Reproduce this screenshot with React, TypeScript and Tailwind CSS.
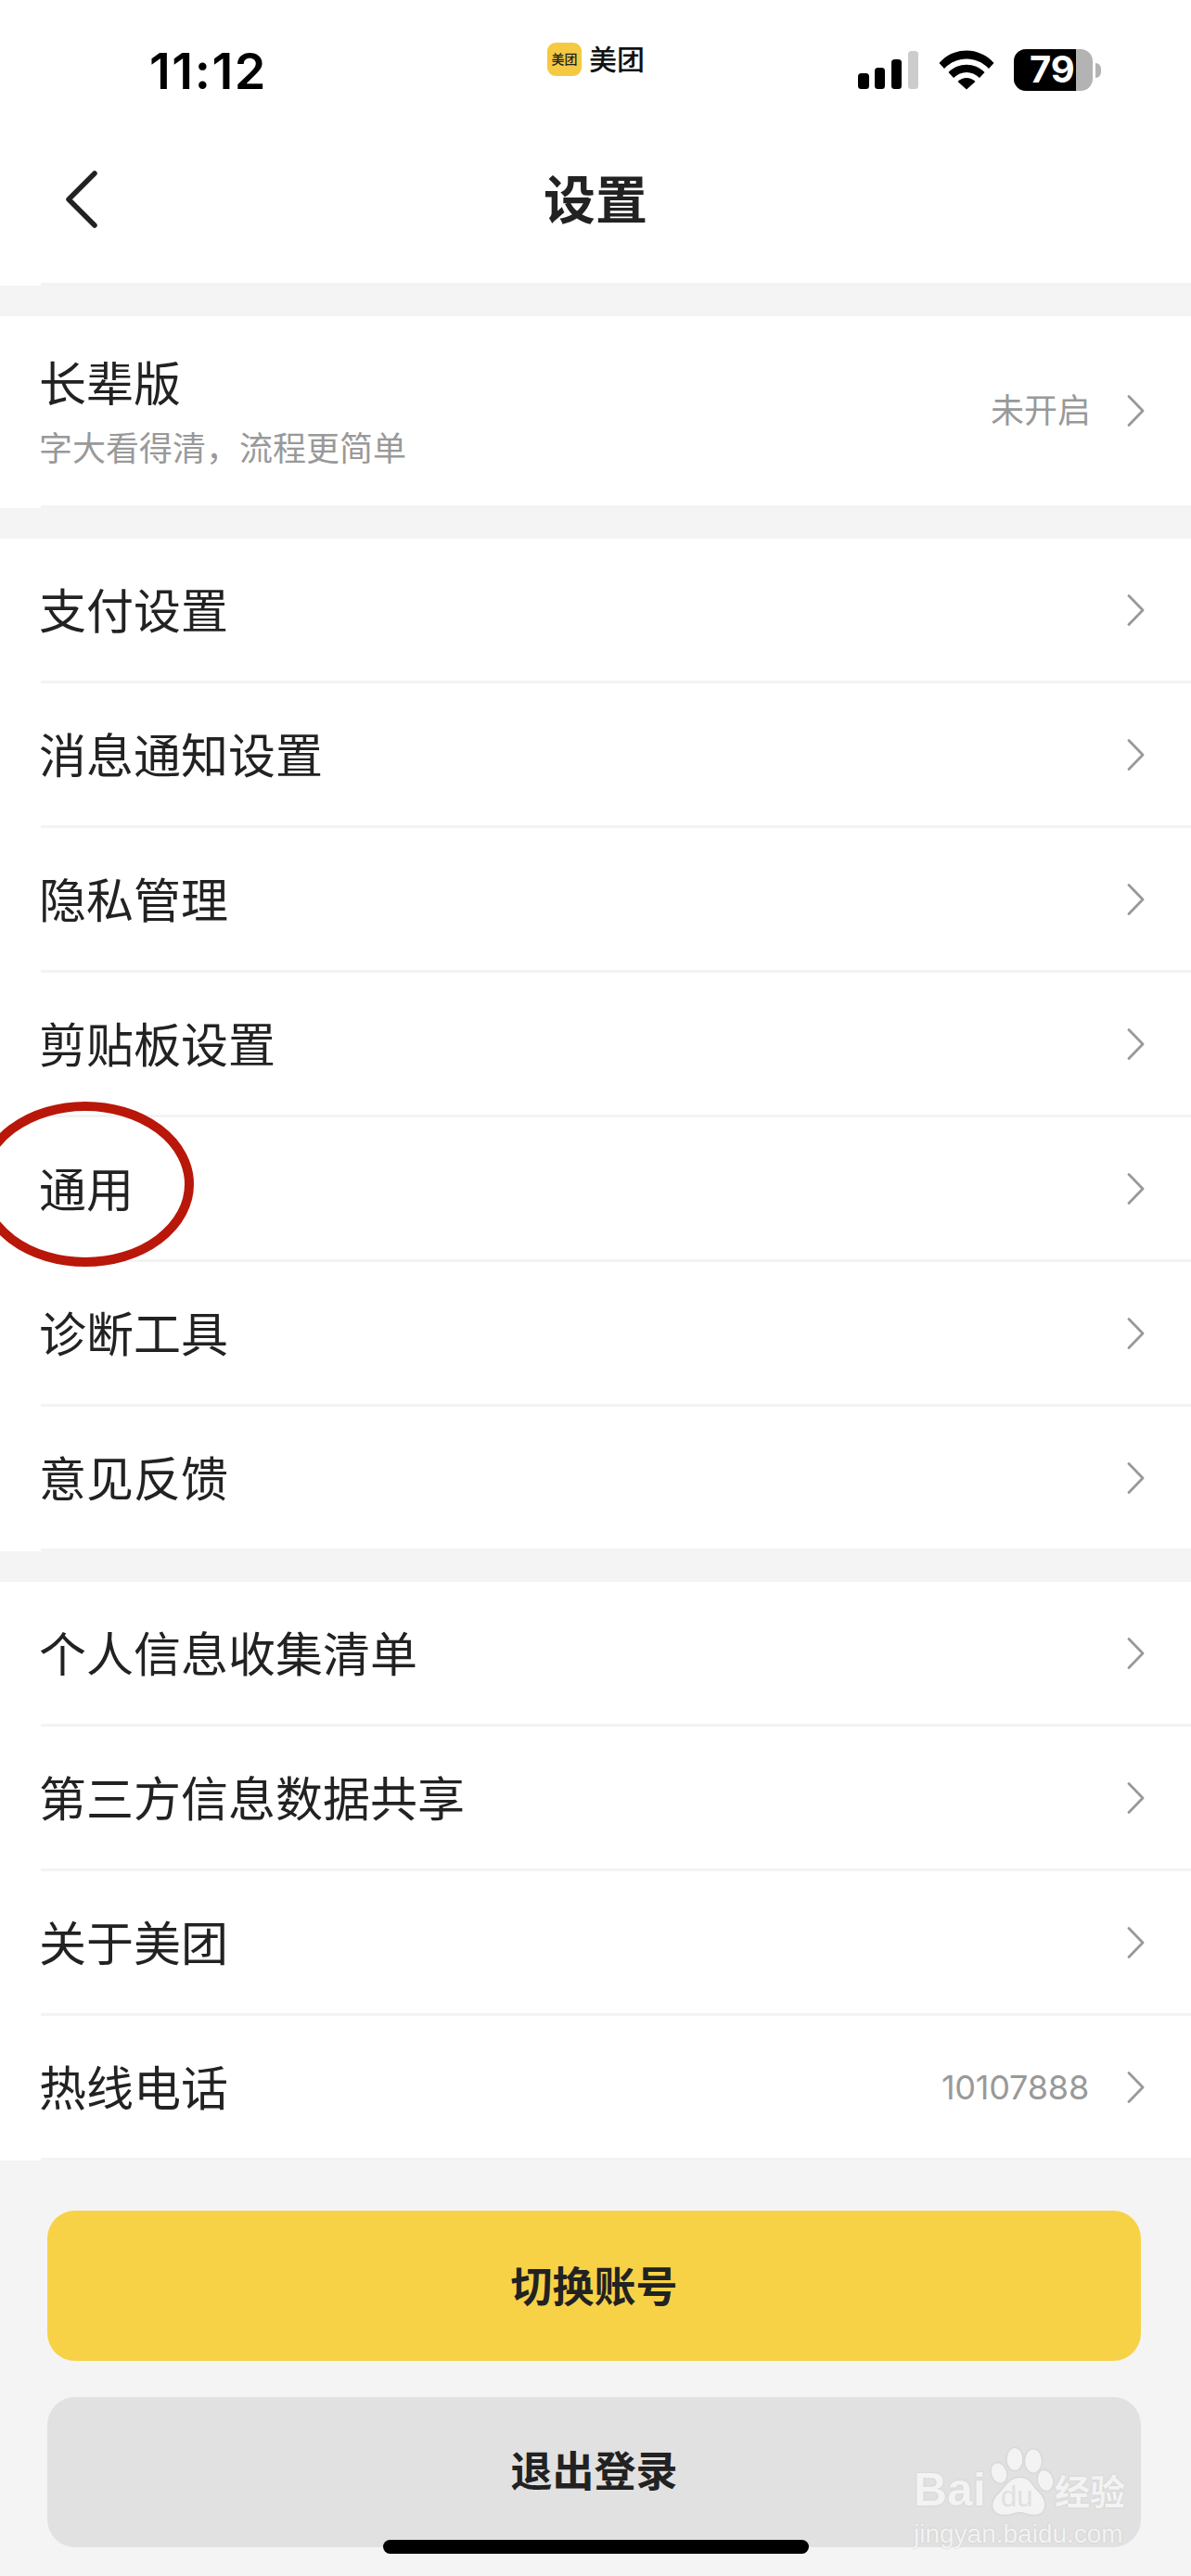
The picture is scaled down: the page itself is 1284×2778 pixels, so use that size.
const cjk = "font-['Inter','Noto_Sans_CJK_SC',sans-serif]";

type Row = { label: string; value?: string };

const group1: Row[] = [
  { label: "支付设置" },
  { label: "消息通知设置" },
  { label: "隐私管理" },
  { label: "剪贴板设置" },
  { label: "通用" },
  { label: "诊断工具" },
  { label: "意见反馈" },
];

const group2: Row[] = [
  { label: "个人信息收集清单" },
  { label: "第三方信息数据共享" },
  { label: "关于美团" },
  { label: "热线电话", value: "10107888" },
];

function Chevron() {
  return (
    <svg width="20" height="34" viewBox="0 0 20 34" fill="none" className="shrink-0">
      <path d="M3 1.5 L18 17 L3 32.5" stroke="#999999" strokeWidth="2.8" strokeLinecap="round" strokeLinejoin="round" />
    </svg>
  );
}

function SettingRow({ label, value }: Row) {
  return (
    <div className="ml-[44px] flex h-[156px] items-center border-b-[3px] border-[#f3f3f3] pr-[50px]">
      <span className="-ml-[2px] flex-1 pt-[3px] text-[51px] leading-none text-[#222222]">{label}</span>
      {value && <span className="mr-[40px] text-[36px] leading-none tracking-[-0.2px] text-[#999999]">{value}</span>}
      <Chevron />
    </div>
  );
}

function StatusBar() {
  return (
    <div className="relative flex h-[120px] items-start">
      <span className="ml-[161px] mt-[47px] text-[54px] font-semibold leading-[60px] tracking-[1.5px] text-black">11:12</span>
      <div className="absolute left-[590px] top-[46px] flex items-center whitespace-nowrap">
        <div className="flex h-[36px] w-[37px] items-center justify-center rounded-[9px] bg-[#f5c942] text-[14px] font-medium leading-none text-[#222222]">
          美团
        </div>
        <span className="ml-[8px] text-[30px] font-medium leading-[36px] text-[#111111]">美团</span>
      </div>
      <div className="absolute left-[925px] top-[53px] flex items-start">
        <svg width="66" height="44" viewBox="0 0 66 44" className="shrink-0">
          <rect x="0" y="26" width="12" height="17" rx="3.5" fill="#000" />
          <rect x="18" y="20" width="11" height="23" rx="3.5" fill="#000" />
          <rect x="36" y="11" width="11" height="32" rx="3.5" fill="#000" />
          <rect x="54" y="2" width="11" height="41" rx="3.5" fill="#cccccc" />
        </svg>
        <svg width="60" height="44" viewBox="0 0 60 44" className="ml-[21px] shrink-0">
          <path d="M0.5 15 C16 -3 44 -3 59.5 15 L54 21 C41 7 19 7 6 21 Z" fill="#000" />
          <path d="M10.5 25 C21 14 39 14 49.5 25 L44 31 C36 23 24 23 16 31 Z" fill="#000" />
          <path d="M20.5 35 C26 29.5 34 29.5 39.5 35 L30 43.5 Z" fill="#000" />
        </svg>
        <div className="relative ml-[21px] flex h-[45px] w-[85px] overflow-hidden rounded-[13px] bg-[#b3b3b3]">
          <div className="h-full w-[67px] bg-black" />
          <span className="absolute left-[17px] top-[2px] text-[40px] font-bold leading-[40px] text-white">79</span>
        </div>
        <div className="ml-[3px] mt-[15px] h-[16px] w-[6px] rounded-r-full bg-[#b3b3b3]" />
      </div>
    </div>
  );
}

function Watermark() {
  return (
    <div className="absolute left-[985px] top-[2638px] h-[112px] w-[240px] text-[#f3f3f3] [text-shadow:0_0_2px_#c4c4c4]">
      <svg width="74" height="80" viewBox="0 0 74 80" className="absolute left-[78px] top-[0px] [filter:drop-shadow(0_0_1px_#c0c0c0)]">
        <ellipse cx="31" cy="14" rx="8.5" ry="12" fill="#f3f3f3" />
        <ellipse cx="51" cy="16" rx="9" ry="12.5" fill="#f3f3f3" />
        <ellipse cx="14" cy="29" rx="8" ry="11" fill="#f3f3f3" transform="rotate(-20 14 29)" />
        <ellipse cx="64" cy="37" rx="8" ry="11" fill="#f3f3f3" transform="rotate(-15 64 37)" />
        <path d="M37 34 C48 34 50 44 57 50 C66 58 66 74 52 74 C44 74 42 71 37 71 C30 71 28 74 20 74 C6 74 4 62 12 53 C20 46 24 34 37 34 Z" fill="#f3f3f3" />
      </svg>
      <span className="absolute left-[94px] top-[37px] font-['Liberation_Sans',sans-serif] text-[31px] leading-[36px] text-[#e0e0e0] [text-shadow:none]">du</span>
      <span className="absolute left-[0px] top-[17px] font-['Liberation_Sans',sans-serif] text-[50px] font-bold leading-[60px]">Bai</span>
      <span className="absolute left-[152px] top-[27px] text-[38px] font-bold leading-[44px]">经验</span>
      <span className="absolute left-[0px] top-[78px] font-['Liberation_Sans',sans-serif] text-[28px] leading-[34px]">jingyan.baidu.com</span>
    </div>
  );
}

export default function App() {
  return (
    <div className={`relative h-[2778px] w-[1284px] overflow-hidden bg-[#f4f4f4] ${cjk}`}>
      <header className="bg-white">
        <StatusBar />
        <div className="ml-[44px] flex h-[188px] items-start border-b-[3px] border-[#f3f3f3] pr-[44px]">
          <svg width="36" height="62" viewBox="0 0 36 62" className="ml-[26px] mt-[64px] shrink-0">
            <path d="M32 3 L4 31 L32 59" fill="none" stroke="#222222" strokeWidth="5.5" strokeLinecap="round" strokeLinejoin="round" />
          </svg>
          <h1 className="ml-[480px] mt-[66px] text-[56px] font-bold leading-[60px] text-[#222222]">设置</h1>
        </div>
      </header>

      <section className="mt-[33px] bg-white">
        <div className="ml-[44px] flex h-[207px] items-center border-b-[3px] border-[#f3f3f3] pr-[50px]">
          <div className="-ml-[2px] flex-1 pt-[5px]">
            <div className="text-[51px] leading-none text-[#222222]">长辈版</div>
            <div className="mt-[26px] text-[36px] leading-none text-[#999999]">字大看得清，流程更简单</div>
          </div>
          <span className="mr-[38px] text-[36px] leading-none text-[#999999]">未开启</span>
          <Chevron />
        </div>
      </section>

      <section className="mt-[33px] bg-white">
        {group1.map((r) => (
          <SettingRow key={r.label} {...r} />
        ))}
      </section>

      <section className="mt-[33px] bg-white">
        {group2.map((r) => (
          <SettingRow key={r.label} {...r} />
        ))}
      </section>

      <div className="ml-[51px] mr-[54px] mt-[54px] flex flex-col gap-[39px]">
        <button className="flex h-[162px] items-center justify-center rounded-[30px] bg-[#f7d247] pt-[3px] text-[45px] font-semibold text-[#222222]">
          切换账号
        </button>
        <button className="flex h-[162px] items-center justify-center rounded-[30px] bg-[#e1e1e1] text-[45px] font-semibold text-[#222222]">
          退出登录
        </button>
      </div>

      <Watermark />

      <div className="absolute left-[413px] top-[2739px] h-[15px] w-[459px] rounded-full bg-black" />

      <svg width="215" height="182" viewBox="0 0 215 182" className="absolute left-[-5px] top-[1186px]">
        <ellipse cx="97" cy="91" rx="112" ry="84" fill="none" stroke="#b9170a" strokeWidth="10" />
      </svg>
    </div>
  );
}
